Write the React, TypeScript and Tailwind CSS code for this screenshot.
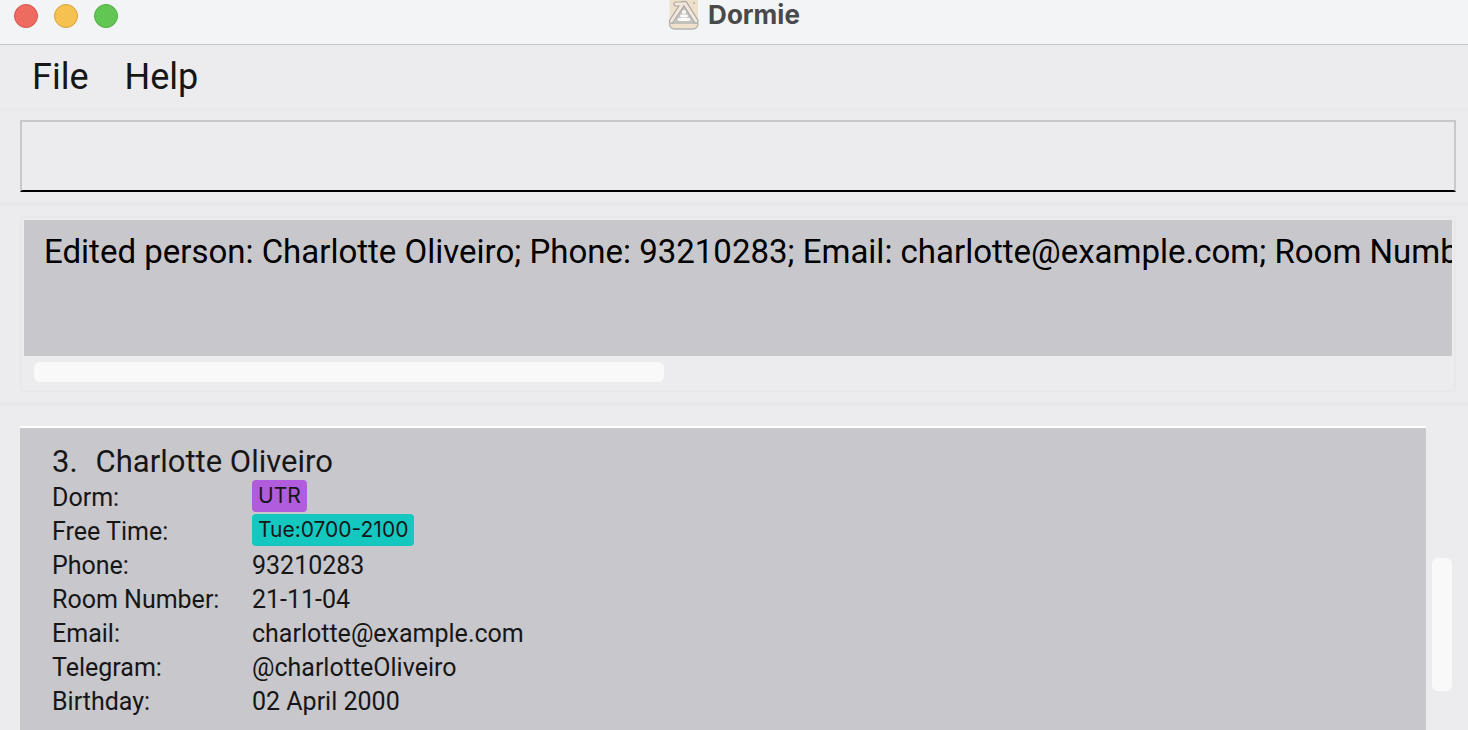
import { useState } from "react";

const message =
  "Edited person: Charlotte Oliveiro; Phone: 93210283; Email: charlotte@example.com; Room Number: 21-11-04";

const details = [
  { label: "Dorm:", value: "UTR", tag: "bg-[#b05cdc]" },
  { label: "Free Time:", value: "Tue:0700-2100", tag: "bg-[#14c8c0]" },
  { label: "Phone:", value: "93210283" },
  { label: "Room Number:", value: "21-11-04" },
  { label: "Email:", value: "charlotte@example.com" },
  { label: "Telegram:", value: "@charlotteOliveiro" },
  { label: "Birthday:", value: "02 April 2000" },
];

function AppIcon() {
  return (
    <svg width="32" height="32" viewBox="0 0 32 32" fill="none" aria-hidden="true">
      <rect x="1.500" y="-4" width="28.500" height="34" rx="6" fill="#efe0cc" />
      <path d="M1.500 24v1a5 5 0 0 0 5 5h18.500a5 5 0 0 0 5-5v-1" stroke="#b5b4b2" strokeWidth="1.400" />
      <path d="M16 5 25.500 23H6.500Z" fill="#c4c3c1" />
      <circle cx="16" cy="13" r="2" fill="#fbfaf8" />
      <path d="M13.500 17h5M11 20.500h10" stroke="#fbfaf8" strokeWidth="2.800" strokeLinecap="round" />
      <path d="M5 24h22" stroke="#b5b4b2" strokeWidth="1.400" strokeLinecap="round" />
      <path d="M8 5h5M15 4.500 3.500 22M17 4.500 28 22" stroke="#aaa9a7" strokeWidth="5.200" strokeLinecap="round" />
      <path d="M8 5h5M15 4.500 3.500 22M17 4.500 28 22" stroke="#f2e7d9" strokeWidth="3" strokeLinecap="round" />
      <circle cx="26" cy="4" r="0.900" fill="#a8adb3" />
    </svg>
  );
}

function TitleBar() {
  return (
    <header className="grid h-[45px] shrink-0 grid-cols-[1fr_auto_1fr] items-start border-b border-[#c6c7c8] bg-[#f2f4f6]">
      <div className="flex gap-4 pl-3.5 pt-1">
        <button aria-label="Close" className="size-6 rounded-full border border-[#d6554b] bg-[#ed6b60]" />
        <button aria-label="Minimize" className="size-6 rounded-full border border-[#d9a441] bg-[#f5c151]" />
        <button aria-label="Zoom" className="size-6 rounded-full border border-[#50ae43] bg-[#62c655]" />
      </div>
      <h1 className="flex h-[30px] items-center gap-2 font-['Inter','Liberation_Sans',sans-serif] text-[26px] leading-7 font-bold text-[#48494a]">
        <AppIcon />
        Dormie
      </h1>
    </header>
  );
}

export default function App() {
  const [command, setCommand] = useState("");

  return (
    <div className="flex h-screen flex-col overflow-hidden bg-[#ececee] font-['Roboto','Liberation_Sans',sans-serif] text-[#161617]">
      <TitleBar />
      <nav className="flex h-[65px] shrink-0 items-center gap-9 border-b-2 border-[#e8e8eb] pl-8 text-[36px]">
        <button>File</button>
        <button>Help</button>
      </nav>

      <section className="shrink-0 border-b-4 border-[#e8e8ec] pb-2.5 pl-5 pr-3 pt-2.5">
        <input
          aria-label="Command"
          value={command}
          onChange={(e) => setCommand(e.target.value)}
          className="block h-[72px] w-full border-2 border-[#c8c8ca] border-b-black bg-transparent px-5 text-[33px] outline-none"
        />
      </section>

      <section className="shrink-0 border-b-4 border-[#e8e8ec] pb-2.5 pl-5 pr-3 pt-2.5">
        <div className="border-2 border-[#e8e8ea] px-0.5 pb-2 pt-0.5">
          <textarea
            aria-label="Result"
            readOnly
            wrap="off"
            value={message}
            className="block h-[136px] w-full resize-none overflow-hidden bg-[#c8c7cc] pl-5 pt-2.5 text-[33px] leading-[44px] text-black outline-none"
          />
          <div className="px-2.5 pt-1.5">
            <div className="h-5 w-[44.75%] rounded-md bg-[#f9f9f9]" />
          </div>
        </div>
      </section>

      <main className="flex min-h-0 grow pl-5 pr-4 pt-5">
        <article className="grow border-t-2 border-white bg-[#c8c7cc] px-8 pt-3.5">
          <h2 className="flex h-[38px] gap-[18px] text-[31px] leading-10">
            <span>3.</span>
            <span>Charlotte Oliveiro</span>
          </h2>
          <dl className="text-[25px]">
            {details.map(({ label, value, tag }) => (
              <div key={label} className="flex h-[34px] items-start leading-9">
                <dt className="w-[200px] shrink-0">{label}</dt>
                <dd>
                  {tag ? (
                    <span
                      className={`block h-8 rounded px-1.5 font-['Inter','Liberation_Sans',sans-serif] text-[21px] leading-8 ${tag}`}
                    >
                      {value}
                    </span>
                  ) : (
                    value
                  )}
                </dd>
              </div>
            ))}
          </dl>
        </article>
        <div className="ml-1.5 flex w-5 shrink-0 flex-col">
          <div className="grow" />
          <div className="h-[133px] rounded-md bg-[#f9f9f9]" />
          <div className="h-[39px]" />
        </div>
      </main>
    </div>
  );
}
